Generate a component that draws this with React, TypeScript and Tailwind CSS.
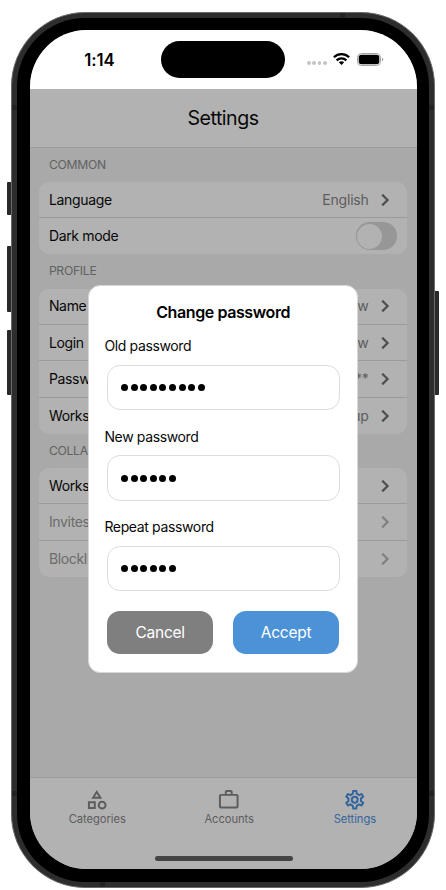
import React from "react";

function Chevron({ faded = false }: { faded?: boolean }) {
  return (
    <svg
      viewBox="0 0 24 24"
      className={`ml-[4.5px] h-6 w-6 shrink-0 ${faded ? "text-[#818181]" : "text-[#4f4f4f]"}`}
      fill="currentColor"
      stroke="currentColor"
      strokeWidth="0.3"
    >
      <path d="M8.59 16.58 13.17 12 8.59 7.41 10 6l6 6-6 6z" />
    </svg>
  );
}

type RowProps = { label: string; value?: string; faded?: boolean; last?: boolean; children?: React.ReactNode };

function Row({ label, value, faded, last, children }: RowProps) {
  return (
    <div
      className={`flex h-[36.3px] items-center pl-[10px] pr-[10px] ${last ? "" : "border-b border-[#9b9b9b]"}`}
    >
      <span className={`text-[14px] leading-5 tracking-[-0.33px] ${faded ? "text-[#6b6b6b]" : "text-[#080808]"}`}>
        {label}
      </span>
      <div className="flex-1" />
      {value && <span className="text-[14px] leading-5 tracking-[-0.2px] text-[#5d5d5d]">{value}</span>}
      {children ?? <Chevron faded={faded} />}
    </div>
  );
}

function Section({ title, children }: { title: string; children: React.ReactNode }) {
  return (
    <section>
      <h2 className="flex h-[34.2px] items-center pl-[10px] text-[12.2px] tracking-[-0.3px] text-[#616161]">
        {title}
      </h2>
      <div className="overflow-hidden rounded-[10px] bg-[#b2b2b2]">{children}</div>
    </section>
  );
}

function Field({ label, count }: { label: string; count: number }) {
  return (
    <div className="h-[90.6px]">
      <div className="h-[28.4px] text-[14px] leading-5 tracking-[-0.36px] text-[#080808]">{label}</div>
      <div className="ml-[2.7px] flex h-[45.5px] w-[232.5px] items-center gap-[2.6px] rounded-[13px] border border-[#dcdcdc] pl-[13px]">
        {Array.from({ length: count }, (_, i) => (
          <span key={i} className="h-[7px] w-[7px] rounded-full bg-black" />
        ))}
      </div>
    </div>
  );
}

function Tab({ label, active, children }: { label: string; active?: boolean; children: React.ReactNode }) {
  return (
    <div className={`flex w-[80px] flex-col items-center ${active ? "text-[#32659b]" : "text-[#5c5c5c]"}`}>
      <svg viewBox="0 0 24 24" className="h-[23.5px] w-[23.5px]" fill="currentColor">
        {children}
      </svg>
      <span className="text-[11.2px] leading-[14px] tracking-[-0.05px]">{label}</span>
    </div>
  );
}

export default function App() {
  return (
    <div className="relative h-[890px] w-[446px] overflow-hidden bg-white pl-[11px] pt-[12px] font-['Inter','Liberation_Sans',sans-serif]">
      <div className="absolute left-[7px] top-[182px] h-[33px] w-[6px] rounded-l-[1px] bg-[#292929]" />
      <div className="absolute left-[7px] top-[246px] h-[66px] w-[6px] rounded-l-[1px] bg-[#292929]" />
      <div className="absolute left-[7px] top-[330px] h-[65px] w-[6px] rounded-l-[1px] bg-[#292929]" />
      <div className="absolute left-[433px] top-[291px] h-[104px] w-[6px] rounded-r-[1px] bg-[#292929]" />

      <div className="relative h-[876px] w-[424px] rounded-[74px] border border-[#6a6a6a] bg-[#2d2d2d] p-[5px]">
        <div className="absolute left-0 top-[92px] h-[5px] w-[5px] bg-[#222222]" />
        <div className="absolute right-0 top-[92px] h-[5px] w-[5px] bg-[#222222]" />
        <div className="absolute left-0 top-[778px] h-[5px] w-[5px] bg-[#222222]" />
        <div className="absolute right-0 top-[778px] h-[5px] w-[5px] bg-[#222222]" />
        <div className="absolute left-[328px] top-0 h-[5px] w-[5px] bg-[#222222]" />
        <div className="absolute bottom-0 left-[88px] h-[5px] w-[5px] bg-[#222222]" />

        <div className="h-[864px] w-[412px] rounded-[68px] bg-black pl-[12.5px] pt-[12px]">
          <div className="relative flex h-[839px] w-[387px] flex-col overflow-hidden rounded-[57px] bg-[#a9a9a9]">
            <div className="flex h-[58.6px] shrink-0 items-center bg-white">
              <span className="w-[131.8px] pl-[54.8px] pt-[1px] text-[16.8px] font-semibold leading-5 tracking-[-0.1px] text-black">
                1:14
              </span>
              <div className="h-[36.5px] w-[123.5px] rounded-full bg-black" />
              <div className="ml-[22px] mt-[8px] flex gap-[1.6px]">
                <span className="h-[3.8px] w-[3.8px] rounded-full bg-[#c4c4c4]" />
                <span className="h-[3.8px] w-[3.8px] rounded-full bg-[#c4c4c4]" />
                <span className="h-[3.8px] w-[3.8px] rounded-full bg-[#c4c4c4]" />
                <span className="h-[3.8px] w-[3.8px] rounded-full bg-[#c4c4c4]" />
              </div>
              <svg viewBox="0 0 17 12" className="ml-[6.5px] h-[12px] w-[17px]" fill="none" stroke="#000" strokeWidth="2.3">
                <path d="M.9 4.3C5.1.1 11.9.1 16.1 4.3" />
                <path d="M3.6 7.3c2.7-2.5 7.1-2.5 9.8 0" />
                <path d="M8.5 12 5.8 9.3c1.5-1.3 3.9-1.3 5.4 0z" fill="#000" stroke="none" />
              </svg>
              <svg viewBox="0 0 27 13" className="ml-[7px] h-[13px] w-[27px]">
                <rect x="0.5" y="0.5" width="23" height="12" rx="3.8" fill="none" stroke="#a5a5a5" />
                <rect x="1.7" y="1.7" width="20.6" height="9.6" rx="2.7" fill="#000" />
                <path d="M25.2 4.5c1.5.5 1.5 3.5 0 4z" fill="#999" />
              </svg>
            </div>

            <header className="flex h-[59.1px] shrink-0 items-center justify-center border-b border-[#9b9b9b] bg-[#b2b2b2] pt-[1.5px] text-[19.6px] tracking-[-0.5px] text-[#080808]">
              Settings
            </header>

            <main className="flex-1 px-[9.4px]">
              <Section title="COMMON">
                <Row label="Language" value="English" />
                <Row label="Dark mode" last>
                  <div className="flex h-[28px] w-[41.5px] items-center rounded-full bg-[#979797] pl-[1.5px]">
                    <div className="h-[25px] w-[25px] rounded-full bg-[#b2b2b2]" />
                  </div>
                </Row>
              </Section>
              <Section title="PROFILE">
                <Row label="Name" value="Andrew" />
                <Row label="Login" value="andrew" />
                <Row label="Password" value="******" />
                <Row label="Workspace" value="Group" last />
              </Section>
              <Section title="COLLABORATION">
                <Row label="Workspace" />
                <Row label="Invites" faded />
                <Row label="Blocklist" faded last />
              </Section>
            </main>

            <nav className="h-[92px] shrink-0 border-t border-[#9b9b9b] bg-[#b2b2b2]">
              <div className="flex pl-[27.7px] pt-[10px]">
                <Tab label="Categories">
                  <path d="M11 13.5v8H3v-8h8m-2 2H5v4h4v-4M12 2l5.5 9h-11L12 2m0 3.86L10.08 9h3.84L12 5.86M17.5 13c2.5 0 4.5 2 4.5 4.5S20 22 17.5 22 13 20 13 17.5s2-4.5 4.5-4.5m0 2a2.5 2.5 0 1 0 0 5 2.5 2.5 0 0 0 0-5z" />
                </Tab>
                <div className="w-[52px]" />
                <Tab label="Accounts">
                  <path d="M20 6c1.1 0 2 .9 2 2v11c0 1.1-.9 2-2 2H4c-1.1 0-2-.9-2-2V8c0-1.1.9-2 2-2h4V4c0-1.1.9-2 2-2h4c1.1 0 2 .9 2 2v2h4M4 8v11h16V8H4m10-2V4h-4v2h4z" />
                </Tab>
                <div className="w-[45.7px]" />
                <Tab label="Settings" active>
                  <path d="M12 8a4 4 0 1 1 0 8 4 4 0 0 1 0-8m0 2a2 2 0 1 0 0 4 2 2 0 0 0 0-4m-2 12c-.25 0-.46-.18-.5-.42l-.37-2.65c-.63-.25-1.17-.59-1.69-.99l-2.49 1.01c-.22.08-.49 0-.61-.22l-2-3.46a.493.493 0 0 1 .12-.64l2.11-1.66L4.5 12l.07-1-2.11-1.63a.493.493 0 0 1-.12-.64l2-3.46c.12-.22.39-.31.61-.22l2.49 1c.52-.39 1.06-.73 1.69-.98l.37-2.65c.04-.24.25-.42.5-.42h4c.25 0 .46.18.5.42l.37 2.65c.63.25 1.17.59 1.69.98l2.49-1c.22-.09.49 0 .61.22l2 3.46c.13.22.07.49-.12.64L19.43 11l.07 1-.07 1 2.11 1.63c.19.15.25.42.12.64l-2 3.46c-.12.22-.39.31-.61.22l-2.49-1c-.52.39-1.06.73-1.69.98l-.37 2.65c-.04.24-.25.42-.5.42h-4m1.25-18-.37 2.61c-1.2.25-2.26.89-3.03 1.78L5.44 7.35l-.75 1.3L6.8 10.2a5.55 5.55 0 0 0 0 3.6l-2.12 1.56.75 1.3 2.43-1.04c.77.88 1.82 1.52 3.01 1.76l.37 2.62h1.52l.37-2.61c1.19-.25 2.24-.89 3.01-1.77l2.43 1.04.75-1.3-2.12-1.55c.4-1.17.4-2.44 0-3.61l2.11-1.55-.75-1.3-2.41 1.04a5.42 5.42 0 0 0-3.03-1.77L12.75 4h-1.5z" />
                </Tab>
              </div>
              <div className="ml-[125px] mt-[30px] h-[5px] w-[138px] rounded-full bg-[#444444]" />
            </nav>

            <div className="absolute left-[58.9px] top-[255px] h-[387.5px] w-[269.5px] rounded-[12px] border border-[#d6d6d6] bg-white">
              <h1 className="pt-[16px] text-center text-[16px] font-semibold leading-5 tracking-[-0.4px] text-black">
                Change password
              </h1>
              <div className="pl-[15px] pt-[14.3px]">
                <Field label="Old password" count={9} />
                <Field label="New password" count={6} />
                <Field label="Repeat password" count={6} />
              </div>
              <div className="flex gap-[19.5px] pl-[17.7px] pt-[2.7px] text-[15.5px] tracking-[-0.25px] text-white">
                <button className="h-[43.5px] w-[106.3px] rounded-[13px] bg-[#7f7f7f] pt-px">Cancel</button>
                <button className="h-[43.5px] w-[106.3px] rounded-[13px] bg-[#4c92d6] pt-px">Accept</button>
              </div>
            </div>
          </div>
        </div>
      </div>
    </div>
  );
}
